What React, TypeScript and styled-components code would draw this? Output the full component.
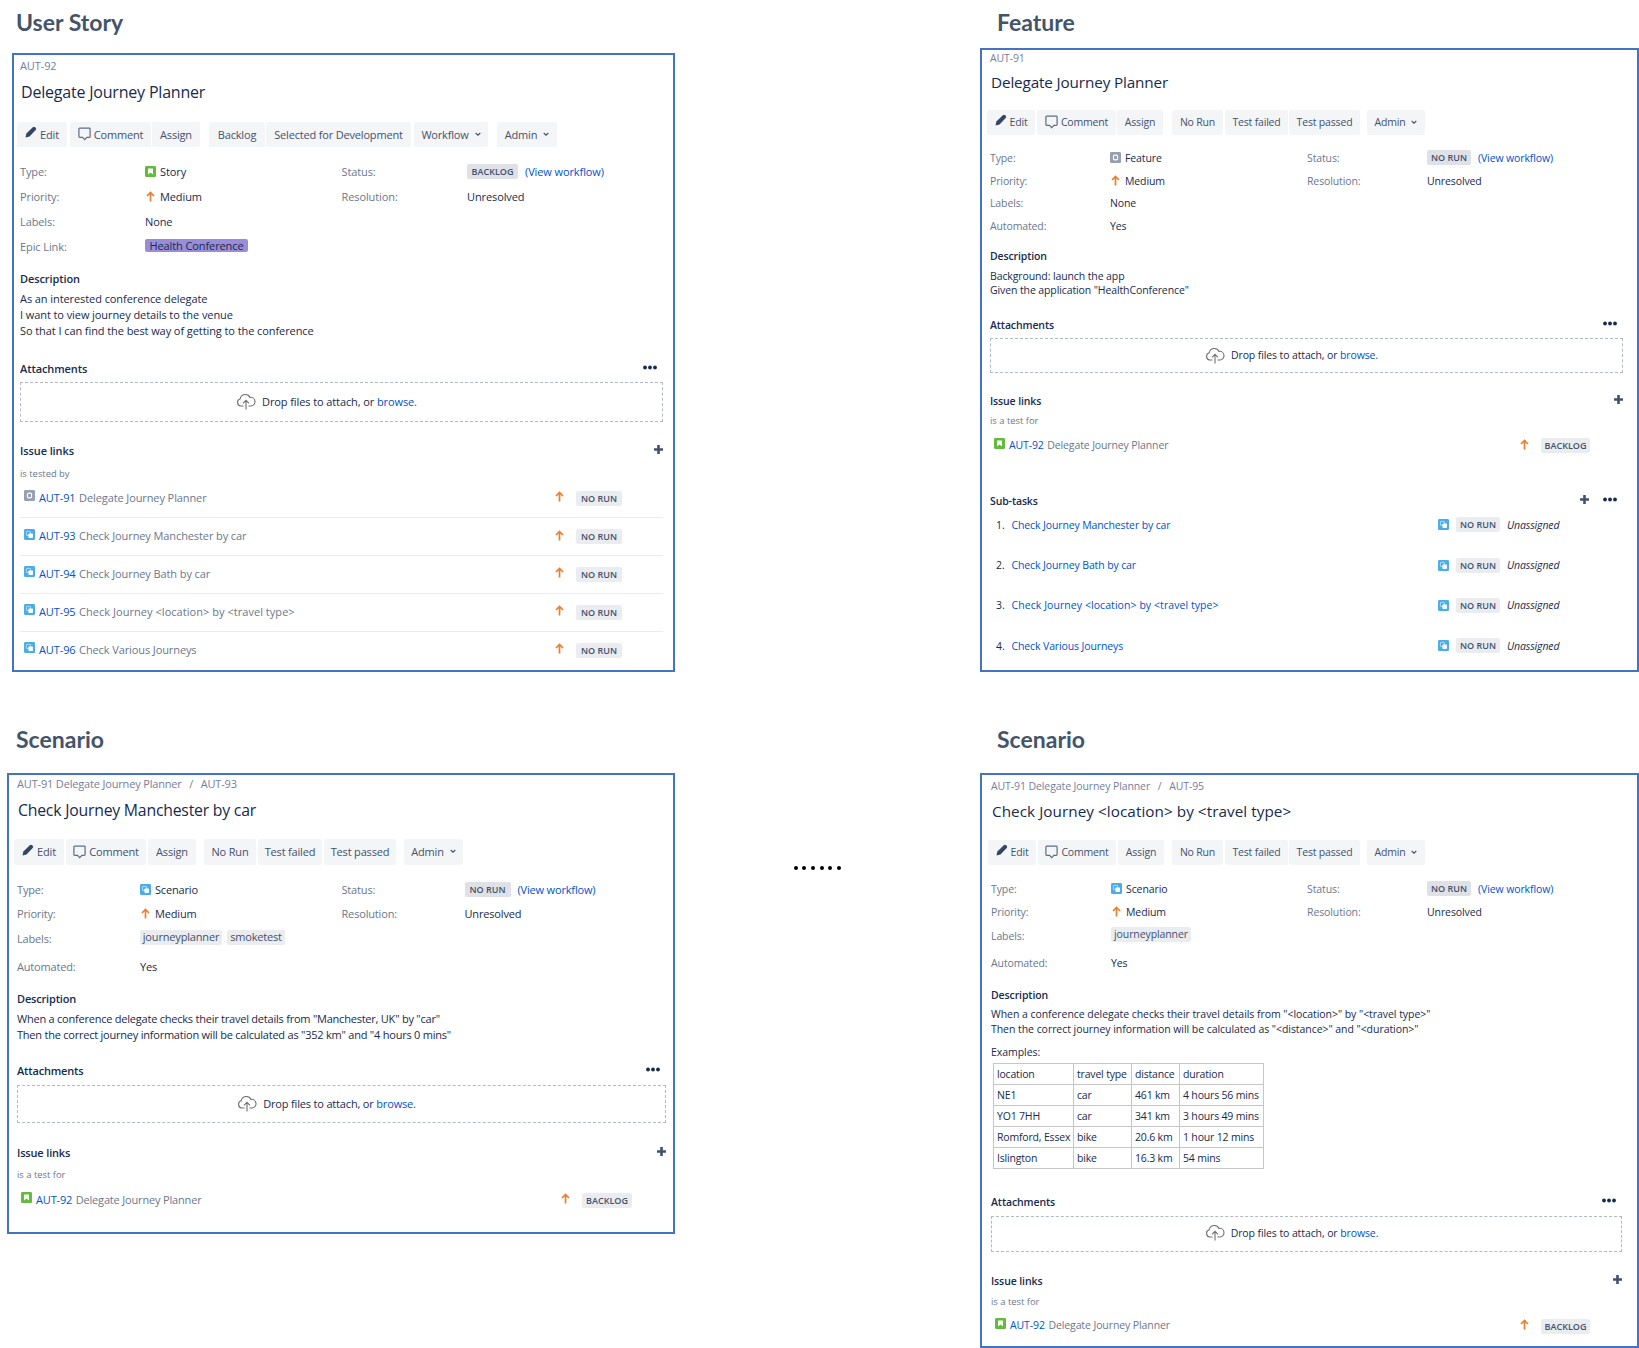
import React from "react";
import styled, { createGlobalStyle, ThemeProvider } from "styled-components";

/* ---------- theme ---------- */

interface Metrics {
  text: number;
  track: number;
  wideTrack: number;
  lineTrack: number;
  line: number;
  pad: number;
  valueX: number;
  statusX: number;
  statusValueX: number;
  crumb: number;
  title: number;
  titleSize: number;
  titleTrack: number;
  bar: number;
  barH: number;
  fields: number;
  desc: number;
  lines: number;
  attach: number;
  drop: number;
  dropH: number;
  dropW: number;
  dropLift: number;
  links: number;
  kind: number;
  rowLift: number;
}

declare module "styled-components" {
  export interface DefaultTheme extends Metrics {}
}

const color = {
  frame: "#4472c4",
  heading: "#44546a",
  ink: "#172b4d",
  muted: "#6b778c",
  button: "#42526e",
  link: "#0052cc",
};

const GlobalStyle = createGlobalStyle`
  * { box-sizing: border-box; }
  body {
    margin: 0;
    background: #fff;
    font-family: "Open Sans", "Noto Sans", sans-serif;
    color: ${color.ink};
  }
`;

/* ---------- page ---------- */

const Page = styled.main`
  display: flex;
  width: 1639px;
  height: 1348px;
  overflow: hidden;
`;

const Column = styled.section<{ $w: number }>`
  display: flex;
  flex-direction: column;
  align-items: flex-start;
  width: ${(p) => p.$w}px;
  flex: none;
`;

const Heading = styled.h2<{ $x: number; $h: number; $top: number }>`
  margin: 0;
  height: ${(p) => p.$h}px;
  padding: ${(p) => p.$top}px 0 0 ${(p) => p.$x}px;
  font: 700 23px/28px Lato, "Open Sans", sans-serif;
  color: ${color.heading};
  white-space: nowrap;
`;

const Panel = styled.article<{ $x: number; $w: number; $h: number }>`
  display: flex;
  flex-direction: column;
  align-items: stretch;
  margin-left: ${(p) => p.$x}px;
  width: ${(p) => p.$w}px;
  height: ${(p) => p.$h}px;
  border: 2px solid ${color.frame};
  padding-left: ${(p) => p.theme.pad}px;
  font-size: ${(p) => p.theme.text}px;
  letter-spacing: ${(p) => p.theme.track}px;
  white-space: nowrap;
`;

const Crumb = styled.div`
  display: flex;
  margin-top: ${(p) => p.theme.crumb}px;
  height: 16px;
  line-height: 16px;
  color: #75809a;
`;

const Slash = styled.span`
  width: 19px;
  text-align: center;
`;

const Title = styled.h1`
  margin: ${(p) => p.theme.title}px 0 0 1px;
  height: 22px;
  font-size: ${(p) => p.theme.titleSize}px;
  line-height: 22px;
  font-weight: 500;
  letter-spacing: ${(p) => p.theme.titleTrack}px;
`;

const Toolbar = styled.div`
  display: flex;
  margin: ${(p) => p.theme.bar}px 0 0 -3px;
  height: ${(p) => p.theme.barH}px;
`;

const Button = styled.button<{ $w: number; $gap: number }>`
  display: flex;
  align-items: center;
  justify-content: center;
  flex: none;
  width: ${(p) => p.$w}px;
  margin: 0 0 0 ${(p) => p.$gap}px;
  padding: 0 0 1px;
  border: 0;
  border-radius: 2px;
  background: #f4f5f7;
  color: ${color.button};
  font: inherit;
  letter-spacing: -0.18px;
`;

const ButtonText = styled.span`
  margin-left: 3px;
`;

const Fields = styled.div`
  margin-top: ${(p) => p.theme.fields}px;
`;

const FieldRow = styled.div<{ $h: number }>`
  display: grid;
  grid-template-columns:
    ${(p) => p.theme.valueX}px ${(p) => p.theme.statusX - p.theme.valueX}px
    ${(p) => p.theme.statusValueX - p.theme.statusX}px 1fr;
  align-items: center;
  height: ${(p) => p.$h}px;
`;

const Label = styled.span`
  color: ${color.muted};
`;

const Value = styled.span`
  display: flex;
  align-items: center;
`;

const Badge = styled.span<{ $w: number; $soft?: boolean }>`
  display: inline-flex;
  align-items: center;
  justify-content: center;
  flex: none;
  width: ${(p) => p.$w}px;
  height: 15px;
  border-radius: 2px;
  background: ${(p) => (p.$soft ? "#ebecf0" : "#dfe1e6")};
  color: ${color.button};
  font-size: 9px;
  font-weight: 600;
  letter-spacing: 0;
`;

const Link = styled.a`
  color: ${color.link};
  text-decoration: none;
`;

const WorkflowLink = styled(Link)`
  margin-left: 7px;
`;

const Epic = styled.span`
  display: inline-flex;
  align-items: center;
  justify-content: center;
  width: 103px;
  height: 13px;
  margin-bottom: 2px;
  border-radius: 2px;
  background: #998dd9;
`;

const Tag = styled.span<{ $w: number }>`
  display: inline-flex;
  align-items: center;
  justify-content: center;
  width: ${(p) => p.$w}px;
  height: 15px;
  margin: 0 5px 3px 0;
  padding-bottom: 1px;
  border-radius: 2px;
  background: #ebecf0;
  color: ${color.button};
`;

const SectionHead = styled.h3<{ $top: number }>`
  display: flex;
  align-items: center;
  justify-content: space-between;
  width: ${(p) => p.theme.dropW}px;
  height: 16px;
  margin: ${(p) => p.$top}px 0 0;
  font-size: inherit;
  line-height: 16px;
  font-weight: 600;
`;

const Actions = styled.span<{ $right?: number }>`
  display: flex;
  align-items: center;
  gap: 14px;
  margin: 0 ${(p) => p.$right ?? 0}px 3px 0;
`;

const Lines = styled.p<{ $top?: number; $line?: number }>`
  margin: ${(p) => p.$top ?? p.theme.lines}px 0 0;
  line-height: ${(p) => p.$line ?? p.theme.line}px;
  letter-spacing: ${(p) => p.theme.lineTrack}px;
`;

const DropZone = styled.div`
  display: flex;
  align-items: center;
  justify-content: center;
  width: ${(p) => p.theme.dropW}px;
  height: ${(p) => p.theme.dropH}px;
  margin-top: ${(p) => p.theme.drop}px;
  padding: 0 30px ${(p) => p.theme.dropLift}px 0;
  border: 1px dashed #b3bac5;
  gap: 6px;
`;

const Kind = styled.div`
  margin-top: ${(p) => p.theme.kind}px;
  height: 10px;
  line-height: 10px;
  font-size: 9.4px;
  letter-spacing: 0;
  color: ${color.muted};
`;

const LinkRow = styled.div<{ $h: number; $arrowX: number }>`
  display: grid;
  grid-template-columns: 4px 15px ${(p) => p.$arrowX - 19}px 22px auto;
  align-items: center;
  width: ${(p) => p.theme.dropW}px;
  height: ${(p) => p.$h}px;
  padding-bottom: ${(p) => p.theme.rowLift}px;
  color: ${color.muted};
  & + & {
    border-top: 1px solid #ebecf0;
  }
  & > ${Badge} {
    margin-top: 2px;
  }
`;

const Summary = styled.span`
  display: flex;
  gap: 3.5px;
`;

/* Placeholders such as <location> are set a little looser than plain words. */
const Name = styled.span<{ $wide?: boolean }>`
  letter-spacing: ${(p) => (p.$wide ? p.theme.wideTrack : p.theme.track)}px;
`;

const SubTasks = styled.ol`
  display: flex;
  flex-direction: column;
  gap: 24.3px;
  margin: 8.3px 0 0;
  padding: 0;
  list-style: none;
`;

const SubTask = styled.li`
  display: grid;
  grid-template-columns: 6px 15.500px 426.500px 18px 51px auto;
  align-items: center;
  height: 16px;
`;

const Table = styled.table`
  width: 270px;
  height: 106px;
  margin: 2.7px 0 0 2px;
  border-collapse: collapse;
  table-layout: fixed;
  letter-spacing: -0.18px;
  td {
    height: 21px;
    padding: 0 0 0 3px;
    border: 1px solid #c6c6c6;
    line-height: 18px;
  }
`;

const Ellipsis = styled.div`
  display: flex;
  gap: 4.7px;
  margin: 866px 0 0 118.5px;
`;

const Dot = styled.i`
  width: 4px;
  height: 4px;
  border-radius: 50%;
  background: #000;
`;

/* ---------- icons ---------- */

const Svg = styled.svg<{ $gap?: number; $lift?: number }>`
  display: block;
  flex: none;
  margin-right: ${(p) => p.$gap ?? 0}px;
  margin-bottom: ${(p) => p.$lift ?? 0}px;
`;

type IssueType = "story" | "feature" | "scenario";

const TypeIcon = ({ type, gap, lift }: { type: IssueType; gap?: number; lift?: number }) => (
  <Svg $gap={gap} $lift={lift} width="11" height="11" viewBox="0 0 16 16">
    {type === "story" && (
      <>
        <rect width="16" height="16" rx="2" fill="#63ba3c" />
        <path d="M4.5 3.5h7v9L8 9.3l-3.5 3.2z" fill="#fff" />
      </>
    )}
    {type === "feature" && (
      <>
        <rect width="16" height="16" rx="2" fill="#97a0af" />
        <rect x="5" y="4.500" width="6" height="7" rx="2" fill="none" stroke="#fff" strokeWidth="1.600" />
      </>
    )}
    {type === "scenario" && (
      <>
        <rect width="16" height="16" rx="2" fill="#4bade8" />
        <rect x="3.500" y="3.500" width="6" height="6" rx="1" fill="none" stroke="#fff" strokeOpacity=".8" strokeWidth="1" />
        <rect x="6.500" y="6.500" width="6.500" height="6.500" rx="1" fill="#fff" />
      </>
    )}
  </Svg>
);

const Arrow = ({ gap }: { gap?: number }) => (
  <Svg $gap={gap} $lift={1} width="11" height="11" viewBox="0 0 11 11">
    <path d="M5.500 10.500V1.400M2 5l3.500-3.600L9 5" fill="none" stroke="#e97f33" strokeWidth="1.700" />
  </Svg>
);

const Pencil = () => (
  <Svg $lift={4} width="12" height="12" viewBox="0 0 12 12">
    <path
      d="M.5 11.500l.9-4L7.800 1.200a1.700 1.700 0 0 1 2.300 0l.6.6a1.700 1.700 0 0 1 0 2.300L4.500 10.500z"
      fill="#344563"
    />
  </Svg>
);

const Bubble = () => (
  <Svg width="13" height="14" viewBox="0 0 13 14">
    <path
      d="M1.700 1.200h9.600a.8.8 0 0 1 .8.8v7.600a.8.8 0 0 1-.8.8H8.900L6.700 12.700 4.500 10.400H1.700a.8.8 0 0 1-.8-.8V2a.8.8 0 0 1 .8-.8z"
      fill="none"
      stroke="#5e6c84"
      strokeWidth="1.200"
    />
  </Svg>
);

const Chevron = styled(Svg)`
  margin-left: 6px;
`;

const Caret = () => (
  <Chevron width="6" height="5" viewBox="0 0 6 5">
    <path d="M.7 1l2.300 2.200L5.300 1" fill="none" stroke="#42526e" strokeWidth="1.100" />
  </Chevron>
);

const Cloud = () => (
  <Svg width="20" height="17" viewBox="0 0 20 17">
    <path
      d="M7.500 13H4.700A3.700 3.700 0 0 1 4.200 5.800 5.200 5.200 0 0 1 14 4.400a4.300 4.300 0 0 1 1.300 8.600H12.500M10 16.500V7.500M7 10.300l3-3 3 3"
      fill="none"
      stroke="#707070"
      strokeWidth="1.100"
    />
  </Svg>
);

const More = () => (
  <Svg width="14" height="5" viewBox="0 0 14 5">
    <circle cx="2" cy="2.500" r="1.900" fill="#172b4d" />
    <circle cx="7" cy="2.500" r="1.900" fill="#172b4d" />
    <circle cx="12" cy="2.500" r="1.900" fill="#172b4d" />
  </Svg>
);

const Plus = () => (
  <Svg width="9" height="9" viewBox="0 0 9 9">
    <path d="M4.500 0v9M0 4.500h9" stroke="#42526e" strokeWidth="2.600" />
  </Svg>
);

/* ---------- shared blocks ---------- */

type Action = { label: string; w: number; gap: number; icon?: "pencil" | "bubble"; menu?: boolean };

const Bar = ({ items }: { items: Action[] }) => (
  <Toolbar>
    {items.map((a) => (
      <Button key={a.label} $w={a.w} $gap={a.gap}>
        {a.icon === "pencil" && <Pencil />}
        {a.icon === "bubble" && <Bubble />}
        {a.icon ? <ButtonText>{a.label}</ButtonText> : a.label}
        {a.menu && <Caret />}
      </Button>
    ))}
  </Toolbar>
);

interface FieldsProps {
  type: IssueType;
  typeName: string;
  status: string;
  statusW: number;
  labels: React.ReactNode;
  last: [string, React.ReactNode];
  rows: number[];
}

const IssueFields = ({ type, typeName, status, statusW, labels, last, rows }: FieldsProps) => (
  <Fields>
    <FieldRow $h={rows[0]}>
      <Label>Type:</Label>
      <Value>
        <TypeIcon type={type} gap={4} />
        {typeName}
      </Value>
      <Label>Status:</Label>
      <Value>
        <Badge $w={statusW}>{status}</Badge>
        <WorkflowLink>(View workflow)</WorkflowLink>
      </Value>
    </FieldRow>
    <FieldRow $h={rows[1]}>
      <Label>Priority:</Label>
      <Value>
        <Arrow gap={4} />
        Medium
      </Value>
      <Label>Resolution:</Label>
      <Value>Unresolved</Value>
    </FieldRow>
    <FieldRow $h={rows[2]}>
      <Label>Labels:</Label>
      <Value>{labels}</Value>
    </FieldRow>
    <FieldRow $h={rows[3]}>
      <Label>{last[0]}</Label>
      <Value>{last[1]}</Value>
    </FieldRow>
  </Fields>
);

const Attachments = ({ m }: { m: Metrics }) => (
  <>
    <SectionHead $top={m.attach}>
      Attachments
      <Actions $right={6}>
        <More />
      </Actions>
    </SectionHead>
    <DropZone>
      <Cloud />
      <span>
        Drop files to attach, or <Link>browse.</Link>
      </span>
    </DropZone>
  </>
);

interface Linked {
  type: IssueType;
  id: string;
  summary: string;
  status: string;
}

interface LinksProps {
  m: Metrics;
  kind: string;
  items: Linked[];
  rowH: number;
  arrowX: number;
  badgeW: number;
}

const IssueLinks = ({ m, kind, items, rowH, arrowX, badgeW }: LinksProps) => (
  <>
    <SectionHead $top={m.links}>
      Issue links
      <Actions>
        <Plus />
      </Actions>
    </SectionHead>
    <Kind>{kind}</Kind>
    {items.map((it) => (
      <LinkRow key={it.id} $h={rowH} $arrowX={arrowX}>
        <span />
        <TypeIcon type={it.type} lift={3} />
        <Summary>
          <Link>{it.id}</Link>
          <Name $wide={it.summary.includes("<")}>{it.summary}</Name>
        </Summary>
        <Arrow />
        <Badge $w={badgeW} $soft>
          {it.status}
        </Badge>
      </LinkRow>
    ))}
  </>
);

/* ---------- data ---------- */

const story: Metrics = {
  text: 11, track: -0.1, wideTrack: 0.04, lineTrack: -0.08, line: 15.7, pad: 6, valueX: 125, statusX: 321.5, statusValueX: 447,
  crumb: 3, title: 7, titleSize: 16, titleTrack: -0.2, bar: 19, barH: 25, fields: 12.6, desc: 12.3, lines: 4.8,
  attach: 22.3, drop: 5.1, dropH: 40, dropW: 643, dropLift: 0, links: 21, kind: 10.5, rowLift: 2,
};

const feature: Metrics = {
  text: 10.5, track: -0.12, wideTrack: 0.07, lineTrack: -0.11, line: 14.4, pad: 8, valueX: 120, statusX: 317, statusValueX: 437,
  crumb: 0, title: 4.8, titleSize: 15.3, titleTrack: -0.15, bar: 17.7, barH: 25, fields: 11, desc: 11, lines: 4.6,
  attach: 19.3, drop: 5, dropH: 35, dropW: 633, dropLift: 0, links: 20, kind: 7.5, rowLift: 0,
};

const scenarioA: Metrics = {
  text: 11, track: -0.17, wideTrack: 0, lineTrack: -0.225, line: 15.65, pad: 8, valueX: 123, statusX: 324.5, statusValueX: 447.5,
  crumb: 1.3, title: 6.7, titleSize: 15.8, titleTrack: -0.22, bar: 18.3, barH: 26, fields: 12.6, desc: 9.4, lines: 4.5,
  attach: 21, drop: 6, dropH: 37.5, dropW: 649, dropLift: 2, links: 22, kind: 9.5, rowLift: 1,
};

const scenarioB: Metrics = {
  text: 10.5, track: -0.1, wideTrack: 0, lineTrack: -0.05, line: 15, pad: 9, valueX: 120, statusX: 316, statusValueX: 436,
  crumb: 3, title: 6, titleSize: 15.3, titleTrack: 0.04, bar: 18, barH: 25, fields: 12.3, desc: 8.8, lines: 4.1,
  attach: 25, drop: 5.6, dropH: 36.5, dropW: 631, dropLift: 2, links: 20.800, kind: 8.5, rowLift: 0,
};

const storyActions: Action[] = [
  { label: "Edit", w: 50, gap: 0, icon: "pencil" },
  { label: "Comment", w: 81, gap: 3, icon: "bubble" },
  { label: "Assign", w: 48, gap: 1 },
  { label: "Backlog", w: 56, gap: 9 },
  { label: "Selected for Development", w: 145, gap: 1 },
  { label: "Workflow", w: 74, gap: 3, menu: true },
  { label: "Admin", w: 60, gap: 9, menu: true },
];

const testActions = (w: number[], g: number[]): Action[] => [
  { label: "Edit", w: w[0], gap: g[0], icon: "pencil" },
  { label: "Comment", w: w[1], gap: g[1], icon: "bubble" },
  { label: "Assign", w: w[2], gap: g[2] },
  { label: "No Run", w: w[3], gap: g[3] },
  { label: "Test failed", w: w[4], gap: g[4] },
  { label: "Test passed", w: w[5], gap: g[5] },
  { label: "Admin", w: w[6], gap: g[6], menu: true },
];

const tested: Linked[] = [
  { type: "feature", id: "AUT-91", summary: "Delegate Journey Planner", status: "NO RUN" },
  { type: "scenario", id: "AUT-93", summary: "Check Journey Manchester by car", status: "NO RUN" },
  { type: "scenario", id: "AUT-94", summary: "Check Journey Bath by car", status: "NO RUN" },
  { type: "scenario", id: "AUT-95", summary: "Check Journey <location> by <travel type>", status: "NO RUN" },
  { type: "scenario", id: "AUT-96", summary: "Check Various Journeys", status: "NO RUN" },
];

const testFor: Linked[] = [{ type: "story", id: "AUT-92", summary: "Delegate Journey Planner", status: "BACKLOG" }];

const subTasks = [
  "Check Journey Manchester by car",
  "Check Journey Bath by car",
  "Check Journey <location> by <travel type>",
  "Check Various Journeys",
];

const examples = [
  ["location", "travel type", "distance", "duration"],
  ["NE1", "car", "461 km", "4 hours 56 mins"],
  ["YO1 7HH", "car", "341 km", "3 hours 49 mins"],
  ["Romford, Essex", "bike", "20.6 km", "1 hour 12 mins"],
  ["Islington", "bike", "16.3 km", "54 mins"],
];

/* ---------- app ---------- */

export default function App() {
  return (
    <Page>
      <GlobalStyle />
      <Column $w={675}>
        <Heading $x={16} $top={8} $h={53}>User Story</Heading>
        <ThemeProvider theme={story}>
          <Panel $x={12} $w={663} $h={619}>
            <Crumb>AUT-92</Crumb>
            <Title>Delegate Journey Planner</Title>
            <Bar items={storyActions} />
            <IssueFields
              type="story"
              typeName="Story"
              status="BACKLOG"
              statusW={51}
              labels="None"
              last={["Epic Link:", <Epic key="epic">Health Conference</Epic>]}
              rows={[24.7, 24.7, 24.7, 24.7]}
            />
            <SectionHead $top={story.desc}>Description</SectionHead>
            <Lines>
              As an interested conference delegate
              <br />
              I want to view journey details to the venue
              <br />
              So that I can find the best way of getting to the conference
            </Lines>
            <Attachments m={story} />
            <IssueLinks m={story} kind="is tested by" items={tested} rowH={37.8} arrowX={534} badgeW={46} />
          </Panel>
        </ThemeProvider>
        <Heading $x={16} $top={53} $h={101}>Scenario</Heading>
        <ThemeProvider theme={scenarioA}>
          <Panel $x={7} $w={668} $h={461}>
            <Crumb>
              AUT-91 Delegate Journey Planner<Slash>/</Slash>AUT-93
            </Crumb>
            <Title>Check Journey Manchester by car</Title>
            <Bar items={testActions([50, 80, 48, 52, 64, 72, 59], [0, 2, 2, 8, 2, 2, 8])} />
            <IssueFields
              type="scenario"
              typeName="Scenario"
              status="NO RUN"
              statusW={46}
              labels={
                <>
                  <Tag $w={82}>journeyplanner</Tag>
                  <Tag $w={58}>smoketest</Tag>
                </>
              }
              last={["Automated:", "Yes"]}
              rows={[24, 24, 25.4, 30]}
            />
            <SectionHead $top={scenarioA.desc}>Description</SectionHead>
            <Lines>
              When a conference delegate checks their travel details from "Manchester, UK" by "car"
              <br />
              Then the correct journey information will be calculated as "352 km" and "4 hours 0 mins"
            </Lines>
            <Attachments m={scenarioA} />
            <IssueLinks m={scenarioA} kind="is a test for" items={testFor} rowH={39} arrowX={543} badgeW={50} />
          </Panel>
        </ThemeProvider>
      </Column>
      <Column $w={305}>
        <Ellipsis>
          {[0, 1, 2, 3, 4, 5].map((i) => (
            <Dot key={i} />
          ))}
        </Ellipsis>
      </Column>
      <Column $w={659}>
        <Heading $x={17} $top={8} $h={48}>Feature</Heading>
        <ThemeProvider theme={feature}>
          <Panel $x={0} $w={659} $h={624}>
            <Crumb>AUT-91</Crumb>
            <Title>Delegate Journey Planner</Title>
            <Bar items={testActions([48, 79, 46, 51, 63, 71, 58], [0, 2, 1, 9, 2, 1, 7])} />
            <IssueFields
              type="feature"
              typeName="Feature"
              status="NO RUN"
              statusW={44}
              labels="None"
              last={["Automated:", "Yes"]}
              rows={[22.7, 22.7, 22.7, 22.7]}
            />
            <SectionHead $top={feature.desc}>Description</SectionHead>
            <Lines>
              Background: launch the app
              <br />
              Given the application "HealthConference"
            </Lines>
            <Attachments m={feature} />
            <IssueLinks m={feature} kind="is a test for" items={testFor} rowH={36.4} arrowX={529} badgeW={49} />
            <SectionHead $top={29.7}>
              Sub-tasks
              <Actions $right={6}>
                <Plus />
                <More />
              </Actions>
            </SectionHead>
            <SubTasks>
              {subTasks.map((s, i) => (
                <SubTask key={s}>
                  <span />
                  <span>{i + 1}.</span>
                  <Link>
                    <Name $wide={s.includes("<")}>{s}</Name>
                  </Link>
                  <TypeIcon type="scenario" />
                  <Badge $w={44} $soft>NO RUN</Badge>
                  <em>Unassigned</em>
                </SubTask>
              ))}
            </SubTasks>
          </Panel>
        </ThemeProvider>
        <Heading $x={17} $top={53} $h={101}>Scenario</Heading>
        <ThemeProvider theme={scenarioB}>
          <Panel $x={0} $w={659} $h={575}>
            <Crumb>
              AUT-91 Delegate Journey Planner<Slash>/</Slash>AUT-95
            </Crumb>
            <Title>Check Journey &lt;location&gt; by &lt;travel type&gt;</Title>
            <Bar items={testActions([48, 78, 46, 51, 63, 71, 58], [0, 2, 2, 8, 2, 1, 7])} />
            <IssueFields
              type="scenario"
              typeName="Scenario"
              status="NO RUN"
              statusW={44}
              labels={<Tag $w={80}>journeyplanner</Tag>}
              last={["Automated:", "Yes"]}
              rows={[23.3, 23.3, 24.2, 29.8]}
            />
            <SectionHead $top={scenarioB.desc}>Description</SectionHead>
            <Lines>
              When a conference delegate checks their travel details from "&lt;location&gt;" by "&lt;travel type&gt;"
              <br />
              Then the correct journey information will be calculated as "&lt;distance&gt;" and "&lt;duration&gt;"
            </Lines>
            <Lines $top={7.5} $line={16}>Examples:</Lines>
            <Table>
              <colgroup>
                <col width="80" />
                <col width="58" />
                <col width="48" />
                <col width="84" />
              </colgroup>
              <tbody>
                {examples.map((r) => (
                  <tr key={r[0]}>
                    {r.map((c) => (
                      <td key={c}>{c}</td>
                    ))}
                  </tr>
                ))}
              </tbody>
            </Table>
            <Attachments m={scenarioB} />
            <IssueLinks m={scenarioB} kind="is a test for" items={testFor} rowH={35.6} arrowX={528} badgeW={49} />
          </Panel>
        </ThemeProvider>
      </Column>
    </Page>
  );
}
